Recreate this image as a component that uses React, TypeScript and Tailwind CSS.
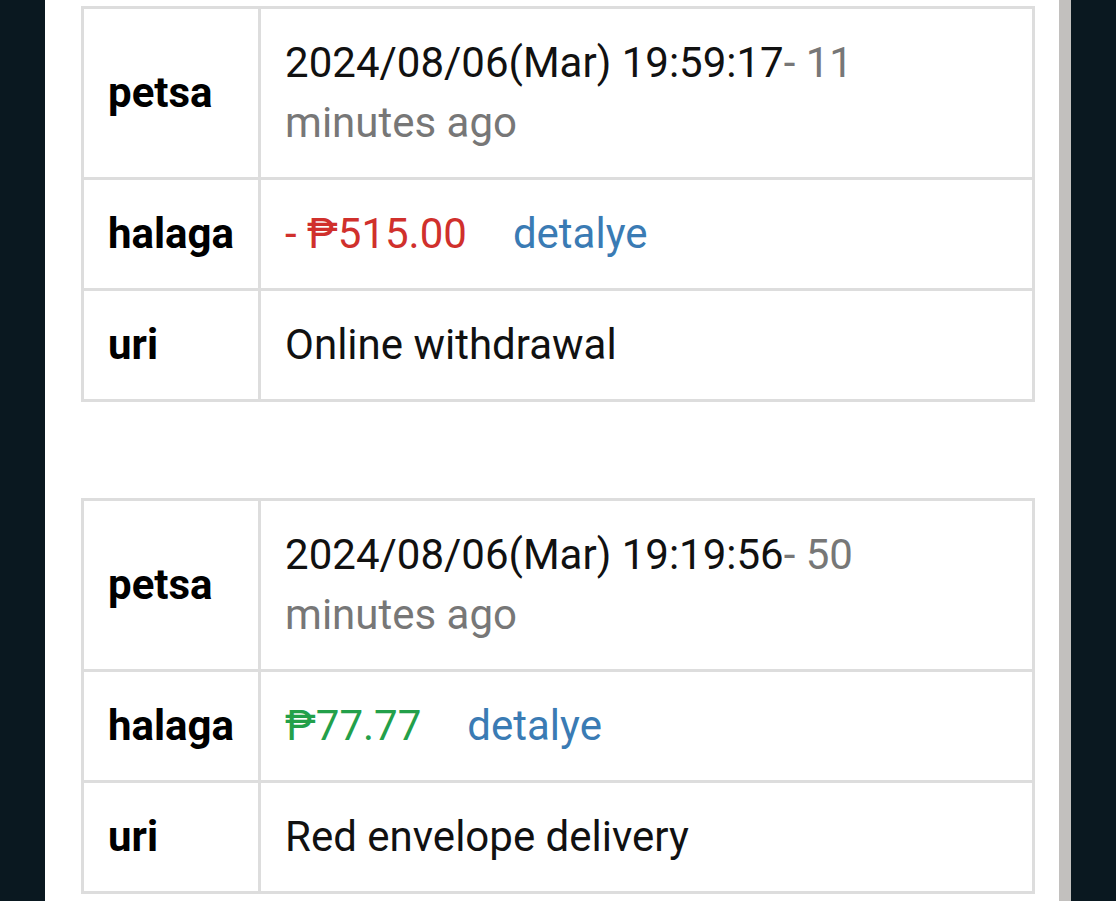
import React from 'react';

type Record = {
  date: string;
  ago: string;
  amount: string;
  negative: boolean;
  note: string;
};

const RECORDS: Record[] = [
  {
    date: '2024/08/06(Mar) 19:59:17',
    ago: '- 11 minutes ago',
    amount: '- ₱515.00',
    negative: true,
    note: 'Online withdrawal',
  },
  {
    date: '2024/08/06(Mar) 19:19:56',
    ago: '- 50 minutes ago',
    amount: '₱77.77',
    negative: false,
    note: 'Red envelope delivery',
  },
];

function RecordTable({ record }: { record: Record }) {
  const labelCell =
    'border-[3px] border-[#dddddd] px-[24px] py-[24px] font-bold text-black whitespace-nowrap align-middle';
  const valueCell = 'border-[3px] border-[#dddddd] px-[24px] py-[24px] w-full align-middle text-[#111]';

  return (
    <table className="w-full border-collapse text-[42px] leading-[60px]">
      <tbody>
        <tr>
          <td className={labelCell}>petsa</td>
          <td className={valueCell}>
            <div className="max-w-[620px]">
              {record.date}
              <span className="text-[#777777]">{record.ago}</span>
            </div>
          </td>
        </tr>
        <tr>
          <td className={labelCell}>halaga</td>
          <td className={valueCell}>
            <span className={record.negative ? 'text-[#d0302c]' : 'text-[#23a04a]'}>{record.amount}</span>
            <a className="ml-[46px] text-[#3a7bb4]">detalye</a>
          </td>
        </tr>
        <tr>
          <td className={labelCell}>uri</td>
          <td className={valueCell}>{record.note}</td>
        </tr>
      </tbody>
    </table>
  );
}

export default function App() {
  return (
    <div
      className="flex h-[901px] w-[1116px] overflow-hidden bg-[#0a1820]"
      style={{ fontFamily: 'Roboto, "Noto Sans", sans-serif' }}
    >
      <div className="w-[45px] shrink-0" />
      <div className="flex-1 bg-white pl-[36px] pr-[24px] pt-[6px]">
        <div className="flex flex-col gap-[96px]">
          {RECORDS.map(r => (
            <RecordTable key={r.date} record={r} />
          ))}
        </div>
      </div>
      <div className="w-[12px] shrink-0 bg-[#c2c0be]" />
      <div className="w-[45px] shrink-0" />
    </div>
  );
}
